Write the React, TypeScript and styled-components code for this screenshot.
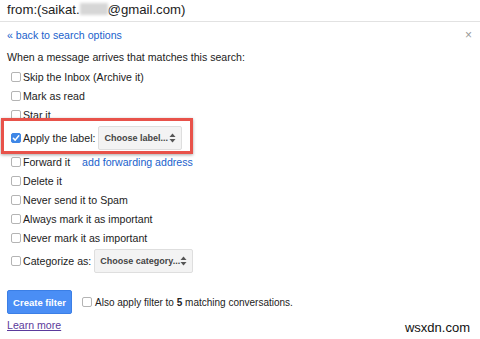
import React from "react";
import styled, { createGlobalStyle } from "styled-components";

const Global = createGlobalStyle`
  html, body { margin: 0; padding: 0; background: #fff; }
  body { font-family: "Liberation Sans", Arial, sans-serif; color: #222; }
`;

const Page = styled.div`
  position: relative;
  width: 480px;
  height: 339px;
  overflow: hidden;
  background: #fff;
`;

const Header = styled.div`
  height: 21px;
  padding: 0 7px;
  border-bottom: 1px solid #e2e2e2;
  font-size: 13.2px;
  line-height: 20px;
  color: #222;
  white-space: nowrap;
`;

const Blur = styled.span`
  display: inline-block;
  width: 28px;
  height: 12px;
  vertical-align: -1px;
  background: #d6d6d6;
  filter: blur(1.5px);
`;

const Body = styled.div`
  display: flex;
  flex-direction: column;
  padding: 0 8px 0 7px;
  font-size: 10.6px;
`;

const TopBar = styled.div`
  display: flex;
  justify-content: space-between;
  align-items: center;
  margin-top: 6px;
  height: 14px;
`;

const Link = styled.a<{ $visited?: boolean; $underline?: boolean }>`
  font-size: 10.6px;
  line-height: 14px;
  color: ${(p) => (p.$visited ? "#5b3a9c" : "#1a5fcc")};
  text-decoration: ${(p) => (p.$underline ? "underline" : "none")};
  cursor: pointer;
`;

const Close = styled.span`
  font-size: 12px;
  line-height: 12px;
  color: #999;
`;

const Intro = styled.div`
  margin-top: 8px;
  line-height: 14px;
  margin-bottom: 3px;
`;

const Row = styled.div<{ $tall?: boolean }>`
  position: relative;
  display: flex;
  align-items: center;
  height: ${(p) => (p.$tall ? "24px" : "19px")};
  margin: ${(p) => (p.$tall ? "2px 0 2px" : "0")};
  padding-left: 4px;
  color: #222;
  white-space: nowrap;
`;

const Box = styled.span<{ $checked?: boolean }>`
  box-sizing: border-box;
  flex: none;
  width: 10px;
  height: 10px;
  margin-right: 2px;
  border-radius: 2px;
  border: 1px solid ${(p) => (p.$checked ? "#3f87e6" : "#b4b4b4")};
  background: ${(p) => (p.$checked ? "#3f87e6" : "#fff")};
  display: flex;
  align-items: center;
  justify-content: center;
`;

const Label = styled.span``;

const Select = styled.span<{ $w: number }>`
  box-sizing: border-box;
  display: inline-flex;
  align-items: center;
  justify-content: space-between;
  width: ${(p) => p.$w}px;
  height: 24px;
  margin-left: 3px;
  padding: 0 5px 0 5px;
  background: #f3f3f3;
  border: 1px solid #dedede;
  border-radius: 2px;
  font-size: 9px;
  font-weight: bold;
  color: #444;
`;

const Extra = styled(Link)`
  margin-left: 12px;
`;

const Highlight = styled.div`
  position: absolute;
  left: -6px;
  top: -8px;
  width: 192px;
  height: 36px;
  box-sizing: border-box;
  border: 3px solid #e8524a;
  box-shadow: 0 1px 3px rgba(0, 0, 0, 0.35);
  pointer-events: none;
`;

const Actions = styled.div`
  display: flex;
  align-items: center;
  margin-top: 15px;
  font-size: 10px;
`;

const Button = styled.button`
  box-sizing: border-box;
  width: 65px;
  height: 24px;
  padding: 0;
  background: #4a8ef5;
  border: 1px solid #3b7fe6;
  border-radius: 2px;
  color: #fff;
  font-family: "Liberation Sans", Arial, sans-serif;
  font-size: 9.5px;
  font-weight: bold;
  margin-right: 10px;
`;

const AlsoBox = styled(Box)`
  margin-right: 3px;
`;

const Learn = styled.div`
  margin-top: 4px;
  height: 14px;
  display: flex;
  align-items: center;
`;

const Watermark = styled.div`
  position: absolute;
  right: 10px;
  top: 320px;
  font-family: "Liberation Sans", Arial, sans-serif;
  font-size: 13px;
  color: #111;
`;

const Arrows = () => (
  <svg width="7" height="10" viewBox="0 0 7 10">
    <path d="M3.5 0.5 L6.5 4 H0.5 Z" fill="#555" />
    <path d="M3.5 9.5 L6.5 6 H0.5 Z" fill="#555" />
  </svg>
);

const Check = () => (
  <svg width="8" height="8" viewBox="0 0 9 9">
    <path d="M1.5 4.8 L3.6 6.9 L7.6 2" stroke="#fff" strokeWidth="1.7" fill="none" strokeLinecap="round" strokeLinejoin="round" />
  </svg>
);

const options = ["Skip the Inbox (Archive it)", "Mark as read", "Star it"];
const options2 = [
  "Delete it",
  "Never send it to Spam",
  "Always mark it as important",
  "Never mark it as important",
];

export default function App() {
  return (
    <Page>
      <Global />
      <Header>
        from:(saikat.<Blur />@gmail.com)
      </Header>
      <Body>
        <TopBar>
          <Link>« back to search options</Link>
          <Close>×</Close>
        </TopBar>
        <Intro>When a message arrives that matches this search:</Intro>
        {options.map((o) => (
          <Row key={o}>
            <Box />
            <Label>{o}</Label>
          </Row>
        ))}
        <Row $tall>
          <Highlight />
          <Box $checked>
            <Check />
          </Box>
          <Label>Apply the label:</Label>
          <Select $w={84}>
            Choose label...
            <Arrows />
          </Select>
        </Row>
        <Row>
          <Box />
          <Label>Forward it</Label>
          <Extra>add forwarding address</Extra>
        </Row>
        {options2.map((o) => (
          <Row key={o}>
            <Box />
            <Label>{o}</Label>
          </Row>
        ))}
        <Row $tall>
          <Box />
          <Label>Categorize as:</Label>
          <Select $w={99}>
            Choose category...
            <Arrows />
          </Select>
        </Row>
        <Actions>
          <Button>Create filter</Button>
          <AlsoBox />
          <span>
            Also apply filter to <b>5</b> matching conversations.
          </span>
        </Actions>
        <Learn>
          <Link $visited $underline>
            Learn more
          </Link>
        </Learn>
      </Body>
      <Watermark>wsxdn.com</Watermark>
    </Page>
  );
}
